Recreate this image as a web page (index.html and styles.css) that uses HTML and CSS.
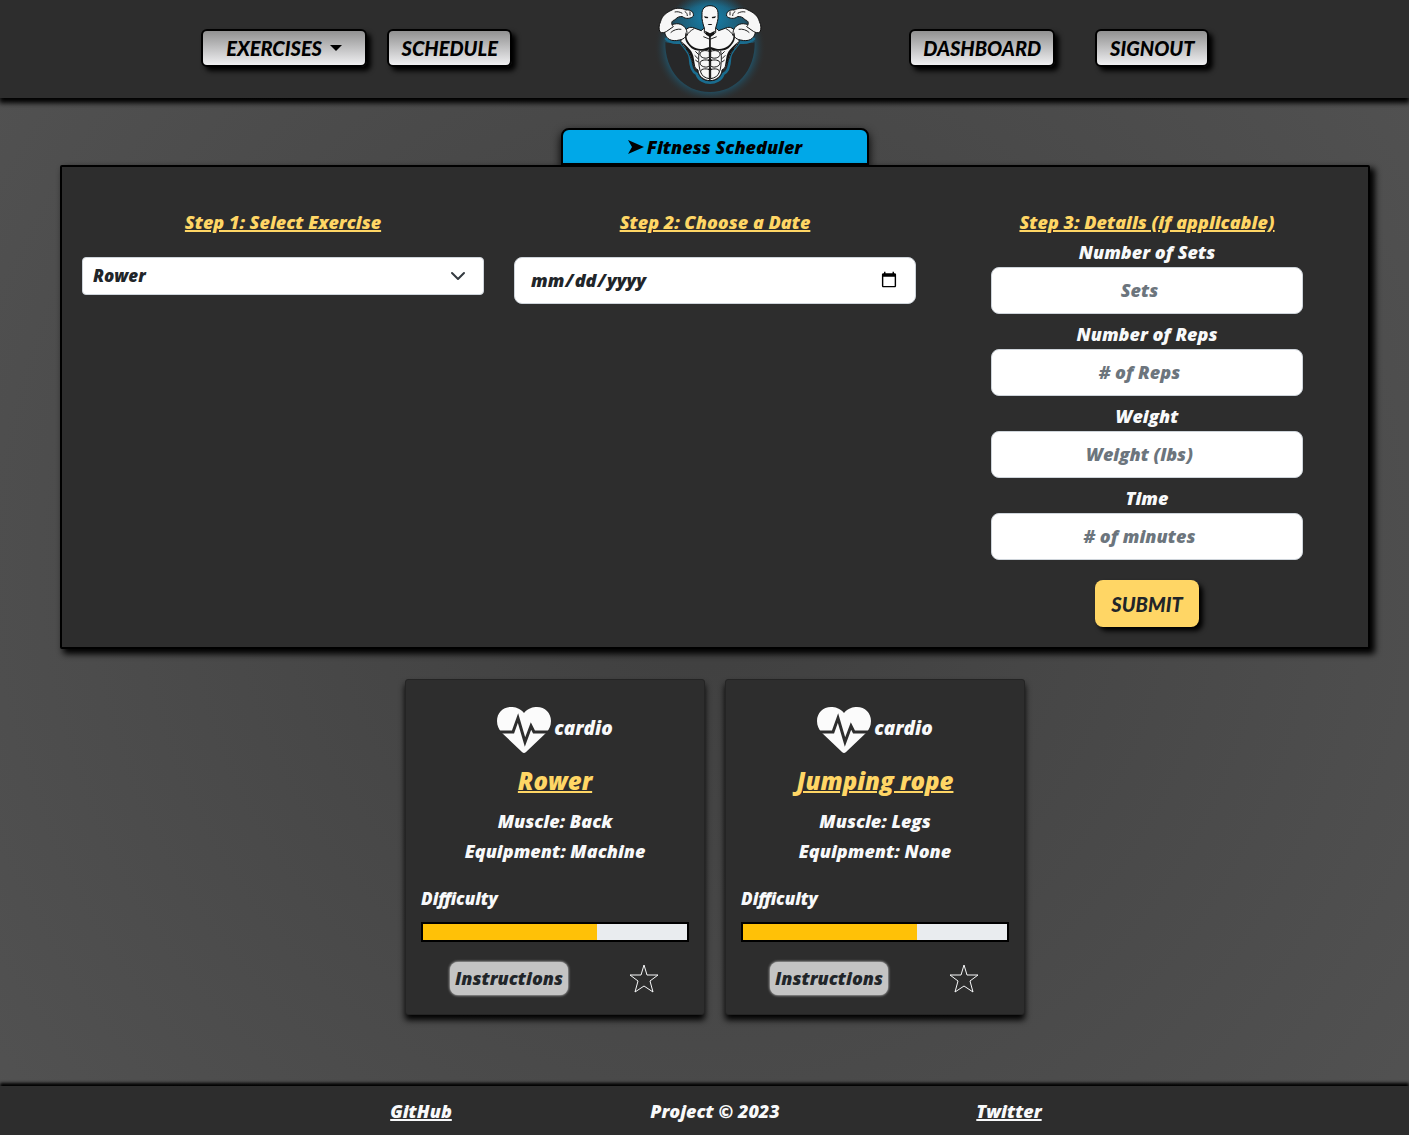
FILE: index.html
```html
<!DOCTYPE html>
<html lang="en">
<head>
<meta charset="utf-8">
<meta name="viewport" content="width=device-width, initial-scale=1">
<title>Fitness Scheduler</title>
<link rel="stylesheet" href="styles.css">
</head>
<body>
<svg class="sprite" aria-hidden="true">
  <symbol id="heart" viewBox="0 0 54 46">
    <path d="M27 6C31 1 36 0 40 0c8 0 14 6 14 14 0 5-2 8-4 11L29 45q-2 2-4 0L4 25C2 22 0 19 0 14 0 6 6 0 14 0c4 0 9 1 13 6z"/>
    <path class="pulse" d="M0 25h16l5-14 7 24 6-16 3 6h17"/>
  </symbol>
  <symbol id="star" viewBox="0 0 34 34">
    <path d="M18 4l3 10h11l-8 6 3 11-9-6-9 6 3-11-8-6h11z"/>
  </symbol>
</svg>

<header class="header">
  <nav class="nav nav-left" aria-label="Exercises and schedule">
    <button class="nav-button nav-menu" type="button">EXERCISES <span class="caret"></span></button>
    <button class="nav-button nav-schedule" type="button">SCHEDULE</button>
  </nav>
  <svg class="logo" viewBox="0 0 420 294" role="img" aria-label="Flexing bodybuilder">
    <defs>
      <radialGradient id="glow" gradientUnits="userSpaceOnUse" cx="210" cy="142" r="168">
        <stop offset="0" stop-color="#1a6c8e"/>
        <stop offset=".76" stop-color="#20566d"/>
        <stop offset="1" stop-color="#2d2d2d" stop-opacity="0"/>
      </radialGradient>
      <radialGradient id="halo">
        <stop offset="0" stop-color="#1488b6"/>
        <stop offset="1" stop-color="#1a6c8e" stop-opacity="0"/>
      </radialGradient>
      <g id="half">
        <path class="skin" d="M210 88l-20-2-6 6-22-8c-12-6-26 2-30 16-4 12-8 18-10 24 4 10 10 16 16 22 12 14 14 30 22 48 4 8 8 12 14 16 0 18 18 32 36 32z"/>
        <path class="skin" d="M74 98c4 20 22 28 44 22 16-2 26-14 22-28-4-14-20-24-36-20-16 2-28 12-30 26z"/>
        <path class="skin" d="M160 48c2-12-8-20-22-18-12-6-30-8-42 0-18 8-30 18-34 34-6 12-6 24-2 32 6 4 14 2 20-2l20-14c-8-8-6-18 4-20 6-8 16-12 24-10 8 8 26 6 32-2z"/>
        <path class="line" d="M134 34c6 4 8 8 8 14M150 34v12M104 36c9-2 16 0 23 4M92 98c8-8 20-12 32-10M162 86c-10 6-18 12-22 22"/>
        <path class="ink" d="M137 96l4 22c10 24 30 32 50 28l19-6v8c-24 8-50 6-62-10-10-12-16-20-11-42z"/>
        <path class="ink" d="M123 122c8 18 24 30 29 48 5 16 8 26 14 32l-6-34c-6-22-22-30-37-46z"/>
        <path class="line" d="M166 154l10 10M164 166l10 10M166 180l8 6M190 110l20 8M178 152c-4 20-2 42 2 60"/>
        <path class="line heavy" d="M210 106v132"/>
        <path class="cut" d="M208 154c-14-5-28-1-28 9 0 11 20 15 28 8zM208 182c-12-5-28-1-28 7 0 11 20 16 28 9zM208 209c-12-5-28-2-26 7 3 12 14 18 26 20z"/>
      </g>
    </defs>
    <circle cx="210" cy="142" r="168" fill="url(#glow)"/>
    <path d="M76 126c8 8 268 8 268 0 2 84-54 150-134 150S74 210 76 126z" fill="#272829"/>
    <ellipse cx="210" cy="52" rx="110" ry="80" fill="url(#halo)"/>
    <path class="aura" d="M76 114c12 13 32 15 46 13 9 15 27 29 28 47 1 25 5 42 20 48 6 18 24 26 40 26s34-8 40-26c15-6 19-23 20-48 1-18 19-32 28-47 14 2 34 0 46-13"/>
    <use href="#half"/>
    <use href="#half" transform="translate(420) scale(-1 1)"/>
    <path class="skin" d="M186 43c-1-16 8-26 24-26s25 10 24 26v13c-2 12-5 20-7 28v14l-17 10-17-10V84c-3-8-5-16-7-28z"/>
    <path class="ink" d="M192 49l13 2-2 4-8-1zm36 0l-13 2 2 4 8-1zM203 72h14l-3 3h-8zM195 92l15 8 15-8-3 12-12 8-12-8z"/>
    <path class="ink" d="M210 145l5 7-5 6-5-6zm0 28l6 7-6 6-6-6zm0 28l5 6-5 6-5-6z"/>
  </svg>
  <nav class="nav nav-right" aria-label="Account">
    <button class="nav-button nav-dashboard" type="button">DASHBOARD</button>
    <button class="nav-button nav-signout" type="button">SIGNOUT</button>
  </nav>
</header>

<main class="main">
  <h1 class="tab"><svg class="arrow" viewBox="0 0 16 14" aria-hidden="true"><path d="M0 0l16 7-16 7 4-7z"/></svg>Fitness Scheduler</h1>
  <form class="panel">
    <section class="step">
      <h2 class="step-title"><label for="exercise">Step 1: Select Exercise</label></h2>
      <select class="select" id="exercise"><option>Rower</option><option>Jumping rope</option></select>
    </section>
    <section class="step">
      <h2 class="step-title"><label for="date">Step 2: Choose a Date</label></h2>
      <input class="field" id="date" type="date">
    </section>
    <section class="step step-details">
      <h2 class="step-title">Step 3: Details (if applicable)</h2>
      <div class="detail"><label for="sets">Number of Sets</label><input class="field" id="sets" type="number" placeholder="Sets"></div>
      <div class="detail"><label for="reps">Number of Reps</label><input class="field" id="reps" type="number" placeholder="# of Reps"></div>
      <div class="detail"><label for="weight">Weight</label><input class="field" id="weight" type="number" placeholder="Weight (lbs)"></div>
      <div class="detail"><label for="time">Time</label><input class="field" id="time" type="number" placeholder="# of minutes"></div>
      <button class="submit" type="submit">SUBMIT</button>
    </section>
  </form>

  <div class="cards">
    <article class="card">
      <p class="kind"><svg class="heart" aria-hidden="true"><use href="#heart"/></svg><span>cardio</span></p>
      <h2 class="card-title">Rower</h2>
      <p>Muscle: Back</p>
      <p>Equipment: Machine</p>
      <p class="difficulty">Difficulty</p>
      <div class="bar"><div class="bar-fill" style="width: 66%"></div></div>
      <div class="actions">
        <button class="instructions" type="button">Instructions</button>
        <button class="favorite" type="button" aria-label="Add to favorites"><svg aria-hidden="true"><use href="#star"/></svg></button>
      </div>
    </article>
    <article class="card">
      <p class="kind"><svg class="heart" aria-hidden="true"><use href="#heart"/></svg><span>cardio</span></p>
      <h2 class="card-title">Jumping rope</h2>
      <p>Muscle: Legs</p>
      <p>Equipment: None</p>
      <p class="difficulty">Difficulty</p>
      <div class="bar"><div class="bar-fill" style="width: 66%"></div></div>
      <div class="actions">
        <button class="instructions" type="button">Instructions</button>
        <button class="favorite" type="button" aria-label="Add to favorites"><svg aria-hidden="true"><use href="#star"/></svg></button>
      </div>
    </article>
  </div>
</main>

<footer class="footer">
  <a href="#github">GitHub</a>
  <span>Project © 2023</span>
  <a href="#twitter">Twitter</a>
</footer>
</body>
</html>
```

FILE: styles.css
```css
* { box-sizing: border-box; }

body {
  margin: 0;
  min-height: 100vh;
  display: flex;
  flex-direction: column;
  background: radial-gradient(circle, #3f3f3f, #525252);
  color: #f8f9fa;
  font: italic 800 18px/30px "Open Sans", sans-serif;
}

h1, h2, p { margin: 0; font: inherit; }
button, input, select { font: inherit; color: #212529; }
button { cursor: pointer; }
.sprite { position: absolute; width: 0; height: 0; }

/* Header */
.header {
  display: grid;
  grid-template-columns: 1fr 140px 1fr;
  align-items: center;
  padding: 0 64px 0 74px;
  background: #2d2d2d;
  box-shadow: 0 4px 5px 1px #000;
}
.nav { display: flex; justify-content: center; padding-bottom: 2px; }
.nav-left { gap: 20px; }
.nav-right { gap: 40px; padding-right: 6px; }
.nav-button, .submit { font-family: Lato, sans-serif; font-size: 20px; font-weight: 900; }
.nav-button {
  height: 38px;
  padding: 0;
  border: 2px solid #000;
  border-radius: 6px;
  background: linear-gradient(#919191, #f0f0f2);
  box-shadow: 4px 4px 5px #000;
  color: #000;
}
.nav-menu { width: 166px; }
.nav-schedule { width: 125px; }
.nav-dashboard { width: 146px; }
.nav-signout { width: 114px; }
.caret {
  display: inline-block;
  margin-left: 4px;
  vertical-align: 5px;
  border: 6px solid transparent;
  border-top-color: #000;
  border-bottom: 0;
}
.logo { display: block; width: 140px; height: 98px; }
.skin { fill: #f7f7f7; stroke: #111; stroke-width: 3; }
.ink { fill: #141414; }
.line { fill: none; stroke: #222; stroke-width: 3; }
.heavy { stroke-width: 4; }
.cut { fill: #f7f7f7; stroke: #111; stroke-width: 3; }
.aura { fill: none; stroke: #1a6c8e; stroke-width: 8; }

/* Scheduler */
.main { flex: 1; padding: 30px 39px 30px 60px; }
.tab {
  display: flex;
  align-items: center;
  justify-content: center;
  gap: 3px;
  width: 308px;
  height: 37px;
  margin: 0 auto;
  border: 2px solid #000;
  border-radius: 8px 8px 0 0;
  background: #00a8e8;
  box-shadow: 0 4px 10px #000;
  color: #000;
}
.arrow { width: 16px; height: 14px; }
.panel {
  position: relative;
  display: grid;
  grid-template-columns: repeat(3, 1fr);
  padding: 40px 5px 20px;
  border: 2px solid #000;
  border-radius: 2px;
  background: #2d2d2d;
  box-shadow: 4px 4px 6px 1px #000;
}
.step { padding: 0 15px; }
.step-title {
  margin-bottom: 20px;
  color: #ffd665;
  text-align: center;
  text-decoration: underline 2px;
}
.select, .field {
  display: block;
  width: 100%;
  border: 1px solid #ced4da;
  background: #fff;
}
.select {
  height: 38px;
  padding: 0 36px 0 10px;
  border-radius: 4px;
  appearance: none;
  background: #fff url("data:image/svg+xml,%3Csvg xmlns='http://www.w3.org/2000/svg' viewBox='0 0 16 16'%3E%3Cpath fill='none' stroke='%23343a40' stroke-linecap='round' stroke-linejoin='round' stroke-width='2' d='M2 5l6 6 6-6'/%3E%3C/svg%3E") no-repeat right 17px center / 16px 16px;
  font-size: 17px;
}
.field { height: 47px; padding: 7px 15px 9px; border-radius: 8px; }
.field::placeholder { color: #6c757d; opacity: 1; }
.step-details { display: flex; flex-direction: column; align-items: center; gap: 5px; }
.step-details .step-title { margin-bottom: -5px; }
.detail { width: 312px; text-align: center; }
.detail label { display: block; }
.detail .field { text-align: center; }
.detail .field::-webkit-inner-spin-button { opacity: 0; }
.submit {
  width: 104px;
  height: 47px;
  margin-top: 15px;
  padding: 0;
  border: 0;
  border-radius: 8px;
  background: #ffd665;
  box-shadow: 4px 4px 5px #000;
}

/* Exercise cards */
.cards { display: flex; flex-wrap: wrap; justify-content: center; gap: 20px; margin-top: 30px; }
.card {
  width: 300px;
  padding: 15px 15px 19px;
  border: 1px solid #242424;
  border-radius: 3px;
  background: #2d2d2d;
  box-shadow: 0 5px 6px #000;
  text-align: center;
}
.kind { display: flex; align-items: center; justify-content: center; gap: 3px; height: 70px; }
.kind span { padding-bottom: 4px; font-size: 19px; }
.heart { width: 54px; height: 46px; fill: #fbfbfb; }
.pulse { fill: none; stroke: #2d2d2d; stroke-width: 3; }
.card-title {
  margin-bottom: 10px;
  color: #ffd665;
  font-size: 24px;
  line-height: 31px;
  text-decoration: underline 2px;
}
.difficulty { margin: 18px 0 8px; font-size: 17px; text-align: left; }
.bar { height: 20px; border: 2px solid #000; background: #e9ecef; }
.bar-fill { height: 100%; background: #ffc107; }
.actions { display: flex; align-items: center; justify-content: space-around; margin-top: 19px; }
.instructions {
  width: 118px;
  height: 33px;
  padding: 0;
  border: 0;
  border-radius: 8px;
  background: #c4c4c4;
  box-shadow: 0 0 3px #fff;
}
.favorite { width: 34px; height: 34px; padding: 0; border: 0; background: none; }
.favorite svg { display: block; width: 34px; height: 34px; fill: none; stroke: #f8f9fa; }

/* Footer */
.footer {
  display: grid;
  grid-template-columns: repeat(3, 294px);
  justify-content: center;
  padding: 10px 0 9px 21px;
  background: #2d2d2d;
  box-shadow: 0 -3px 3px #000;
  text-align: center;
}
.footer a { color: inherit; text-decoration-thickness: 2px; }
```
